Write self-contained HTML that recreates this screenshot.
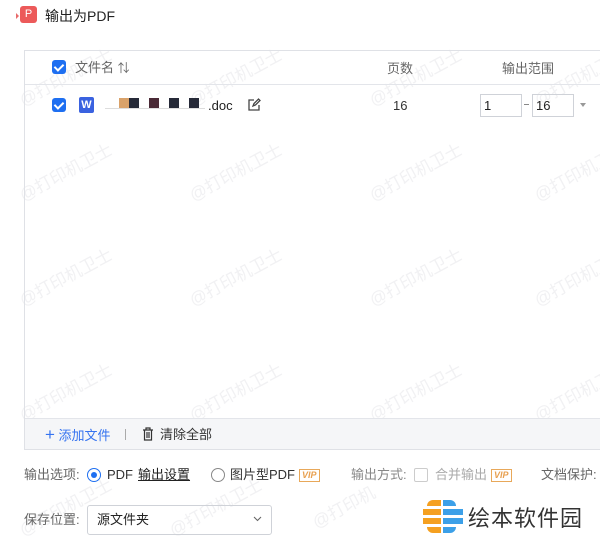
<!DOCTYPE html>
<html><head><meta charset="utf-8"><style>
*{margin:0;padding:0;box-sizing:border-box}
body{width:600px;height:545px;background:#fff;font-family:"Liberation Sans","Noto Sans CJK SC",sans-serif;font-size:13px;line-height:16px;color:#333;position:relative;overflow:hidden}
.a{position:absolute}
.cb{position:absolute;width:14px;height:14px;background:#1e6ff1;border-radius:3px}
.cb:after{content:"";position:absolute;left:4px;top:2px;width:4px;height:7px;border:solid #fff;border-width:0 2px 2px 0;transform:rotate(45deg)}
.wm{position:absolute;color:#f1f1f3;font-size:17px;transform:rotate(-28deg);white-space:nowrap}
.vip{display:inline-block;border:1px solid #e8a85a;color:#e8a050;font-size:9px;font-weight:bold;font-style:italic;padding:0 2px;line-height:11px;margin-left:4px;vertical-align:1px}
</style></head><body>
<div class="a" style="left:16px;top:13px;width:0;height:0;border-left:3px solid #e86b6b;border-top:3px solid transparent;border-bottom:3px solid transparent"></div>
<div class="a" style="left:20px;top:6px;width:17px;height:17px;background:#ec5a5a;border-radius:3px;color:#fff;font-size:11px;text-align:center;line-height:17px">P</div>
<div class="a" style="left:45px;top:8px;font-size:14px;color:#222">输出为PDF</div>

<div class="wm" style="left:15px;top:70px">@打印机卫士</div>
<div class="wm" style="left:185px;top:70px">@打印机卫士</div>
<div class="wm" style="left:365px;top:70px">@打印机卫士</div>
<div class="wm" style="left:530px;top:70px">@打印机卫士</div>
<div class="wm" style="left:15px;top:165px">@打印机卫士</div>
<div class="wm" style="left:185px;top:165px">@打印机卫士</div>
<div class="wm" style="left:365px;top:165px">@打印机卫士</div>
<div class="wm" style="left:530px;top:165px">@打印机卫士</div>
<div class="wm" style="left:15px;top:270px">@打印机卫士</div>
<div class="wm" style="left:185px;top:270px">@打印机卫士</div>
<div class="wm" style="left:365px;top:270px">@打印机卫士</div>
<div class="wm" style="left:530px;top:270px">@打印机卫士</div>
<div class="wm" style="left:15px;top:385px">@打印机卫士</div>
<div class="wm" style="left:185px;top:385px">@打印机卫士</div>
<div class="wm" style="left:365px;top:385px">@打印机卫士</div>
<div class="wm" style="left:530px;top:385px">@打印机卫士</div>
<div class="wm" style="left:15px;top:500px">@打印机卫士</div>
<div class="wm" style="left:165px;top:500px">@打印机卫士</div>
<div class="wm" style="left:310px;top:500px">@打印机</div>

<div class="a" style="left:24px;top:50px;width:590px;height:400px;border:1px solid #dfe1e6"></div>
<div class="a" style="left:25px;top:84px;width:580px;height:1px;background:#e3e5ea"></div>
<div class="a" style="left:25px;top:418px;width:580px;height:31px;background:#f5f6f8;border-top:1px solid #e3e5ea"></div>

<div class="cb" style="left:52px;top:60px"></div>
<div class="a" style="left:75px;top:60px;color:#666">文件名 <span style="font-size:12px">⇅</span></div>
<div class="a" style="left:387px;top:61px;color:#666">页数</div>
<div class="a" style="left:502px;top:61px;color:#666">输出范围</div>

<div class="cb" style="left:52px;top:98px"></div>
<div class="a" style="left:79px;top:97px;width:15px;height:16px;background:#3a62e0;border-radius:2px;color:#fff;font-size:11px;font-weight:bold;text-align:center;line-height:16px">W</div>
<div class="a" style="left:119px;top:98px;width:10px;height:10px;background:#d9a26a"></div>
<div class="a" style="left:129px;top:98px;width:10px;height:10px;background:#262a38"></div>
<div class="a" style="left:149px;top:98px;width:10px;height:10px;background:#4a2a36"></div>
<div class="a" style="left:169px;top:98px;width:10px;height:10px;background:#262a38"></div>
<div class="a" style="left:189px;top:98px;width:10px;height:10px;background:#262a38"></div>
<div class="a" style="left:105px;top:108px;width:100px;height:1px;background:#ddd"></div>
<div class="a" style="left:208px;top:98px;color:#222">.doc</div>
<svg class="a" style="left:247px;top:98px" width="14" height="14" viewBox="0 0 14 14" fill="none" stroke="#444" stroke-width="1.3"><path d="M7 2H2v10h10V7"/><path d="M6 8l1-2.5L11.5 1l1.5 1.5L8.5 7z"/></svg>
<div class="a" style="left:393px;top:98px;color:#333">16</div>
<div class="a" style="left:480px;top:94px;width:42px;height:23px;border:1px solid #cfd2d8;padding:3px 3px;color:#222">1</div>
<div class="a" style="left:524px;top:104px;width:5px;height:1px;background:#888"></div>
<div class="a" style="left:532px;top:94px;width:42px;height:23px;border:1px solid #cfd2d8;padding:3px 3px;color:#222">16</div>
<div class="a" style="left:580px;top:103px;border-top:4px solid #999;border-left:3px solid transparent;border-right:3px solid transparent"></div>

<div class="a" style="left:45px;top:427px;color:#3573f0;font-size:13px"><span style="font-size:17px">+</span> 添加文件</div>
<div class="a" style="left:125px;top:429px;width:1px;height:11px;background:#aaa"></div>
<svg class="a" style="left:142px;top:427px" width="12" height="14" viewBox="0 0 12 14" fill="none" stroke="#333" stroke-width="1.2"><path d="M1 3h10M4 3V1h4v2M2.5 3v10h7V3M5 5v6M7 5v6"/></svg>
<div class="a" style="left:160px;top:427px;color:#333">清除全部</div>

<div class="a" style="left:24px;top:467px;color:#666">输出选项:</div>
<div class="a" style="left:87px;top:468px;width:14px;height:14px;border:1px solid #1e6ff1;border-radius:50%"></div>
<div class="a" style="left:91px;top:472px;width:6px;height:6px;background:#1e6ff1;border-radius:50%"></div>
<div class="a" style="left:107px;top:467px;color:#333">PDF</div>
<div class="a" style="left:138px;top:467px;color:#222;text-decoration:underline">输出设置</div>
<div class="a" style="left:211px;top:468px;width:14px;height:14px;border:1px solid #888;border-radius:50%"></div>
<div class="a" style="left:230px;top:467px;color:#333">图片型PDF<span class="vip">VIP</span></div>
<div class="a" style="left:351px;top:467px;color:#888">输出方式:</div>
<div class="a" style="left:414px;top:468px;width:14px;height:14px;border:1px solid #ccc;border-radius:2px"></div>
<div class="a" style="left:435px;top:467px;color:#aaa">合并输出<span class="vip">VIP</span></div>
<div class="a" style="left:541px;top:467px;color:#666">文档保护:</div>

<div class="a" style="left:24px;top:512px;color:#666">保存位置:</div>
<div class="a" style="left:87px;top:505px;width:185px;height:30px;border:1px solid #cfd2d8;border-radius:3px;padding:6px 9px;color:#222">源文件夹</div>
<svg class="a" style="left:253px;top:516px" width="9" height="6" viewBox="0 0 9 6" fill="none" stroke="#666" stroke-width="1.1"><path d="M1 1l3.5 3.5L8 1"/></svg>

<div class="a" style="left:420px;top:497px;width:48px;height:44px;background:#fff"></div>
<div class="a" style="left:427px;top:500px;width:14px;height:6px;background:#f5a020;border-radius:6px 0 0 0"></div>
<div class="a" style="left:443px;top:500px;width:13px;height:6px;background:#3ca0e8;border-radius:0 6px 0 0"></div>
<div class="a" style="left:423px;top:509px;width:18px;height:6px;background:#f5a020"></div>
<div class="a" style="left:443px;top:509px;width:20px;height:6px;background:#3ca0e8"></div>
<div class="a" style="left:423px;top:518px;width:18px;height:6px;background:#f5a020"></div>
<div class="a" style="left:443px;top:518px;width:20px;height:6px;background:#3ca0e8"></div>
<div class="a" style="left:427px;top:527px;width:14px;height:6px;background:#f5a020;border-radius:0 0 0 6px"></div>
<div class="a" style="left:443px;top:527px;width:13px;height:6px;background:#3ca0e8;border-radius:0 0 6px 0"></div>
<div class="a" style="left:468px;top:502px;width:128px;height:32px;background:#fff"></div>
<div class="a" style="left:468px;top:506px;font-size:22px;line-height:26px;color:#333;letter-spacing:1px">绘本软件园</div>
</body></html>
